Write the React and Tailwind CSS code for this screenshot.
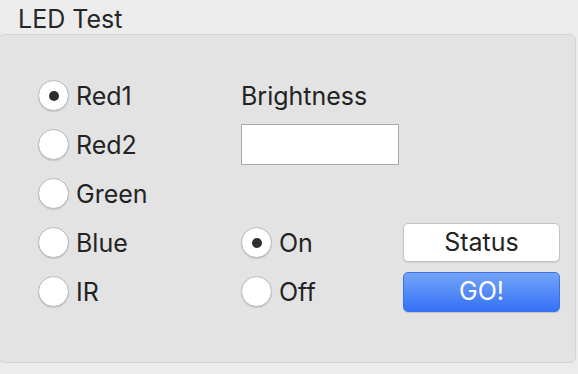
import React, { useState } from 'react';

const Radio = ({ label, checked, onClick }) => (
  <button type="button" onClick={onClick} className="flex items-center gap-[7px] text-left">
    <span className="w-[31px] h-[31px] rounded-full bg-white border border-[#b9b9b9] shadow-[0_1px_1px_rgba(0,0,0,0.12)] flex items-center justify-center">
      {checked && <span className="w-[10px] h-[10px] rounded-full bg-[#2f2f2f]" />}
    </span>
    <span className="text-[25px] text-[#232323] leading-none pt-[2px]">{label}</span>
  </button>
);

const App = () => {
  const [led, setLed] = useState('Red1');
  const [power, setPower] = useState('On');

  return (
    <div className="w-[578px] h-[374px] bg-[#ececec] overflow-hidden font-['Inter','Liberation_Sans',sans-serif]">
      {/* Group title */}
      <div className="h-[34px] pl-[18px] flex items-end pb-[2px]">
        <span className="text-[25px] text-[#262626] leading-none">LED Test</span>
      </div>

      {/* Group box */}
      <div className="-ml-[2px] w-[578px] h-[329px] bg-[#e3e3e3] border border-[#d2d2d2] rounded-[6px] pt-[36px] pl-[39px]">
        <div className="grid grid-cols-[203px_162px_157px] grid-rows-[49px_49px_49px_49px_49px] items-center">
          <Radio label="Red1" checked={led === 'Red1'} onClick={() => setLed('Red1')} />
          <span className="text-[25px] text-[#232323] leading-none pt-[2px]">Brightness</span>
          <span />

          <Radio label="Red2" checked={led === 'Red2'} onClick={() => setLed('Red2')} />
          <input className="w-[158px] h-[41px] bg-white border border-[#a9a9a9] outline-none px-1" />
          <span />

          <Radio label="Green" checked={led === 'Green'} onClick={() => setLed('Green')} />
          <span />
          <span />

          <Radio label="Blue" checked={led === 'Blue'} onClick={() => setLed('Blue')} />
          <Radio label="On" checked={power === 'On'} onClick={() => setPower('On')} />
          <button type="button" className="w-[157px] h-[39px] bg-white border border-[#c4c4c4] rounded-[5px] shadow-[0_1px_1px_rgba(0,0,0,0.1)] text-[25px] leading-none text-[#232323]">
            Status
          </button>

          <Radio label="IR" checked={led === 'IR'} onClick={() => setLed('IR')} />
          <Radio label="Off" checked={power === 'Off'} onClick={() => setPower('Off')} />
          <button type="button" className="w-[157px] h-[40px] rounded-[5px] bg-gradient-to-b from-[#74a4f8] to-[#3470f5] border border-[#3b72e6] shadow-[0_1px_1px_rgba(0,0,0,0.15)] text-[25px] leading-none text-white">
            GO!
          </button>
        </div>
      </div>
    </div>
  );
};

export default App;
